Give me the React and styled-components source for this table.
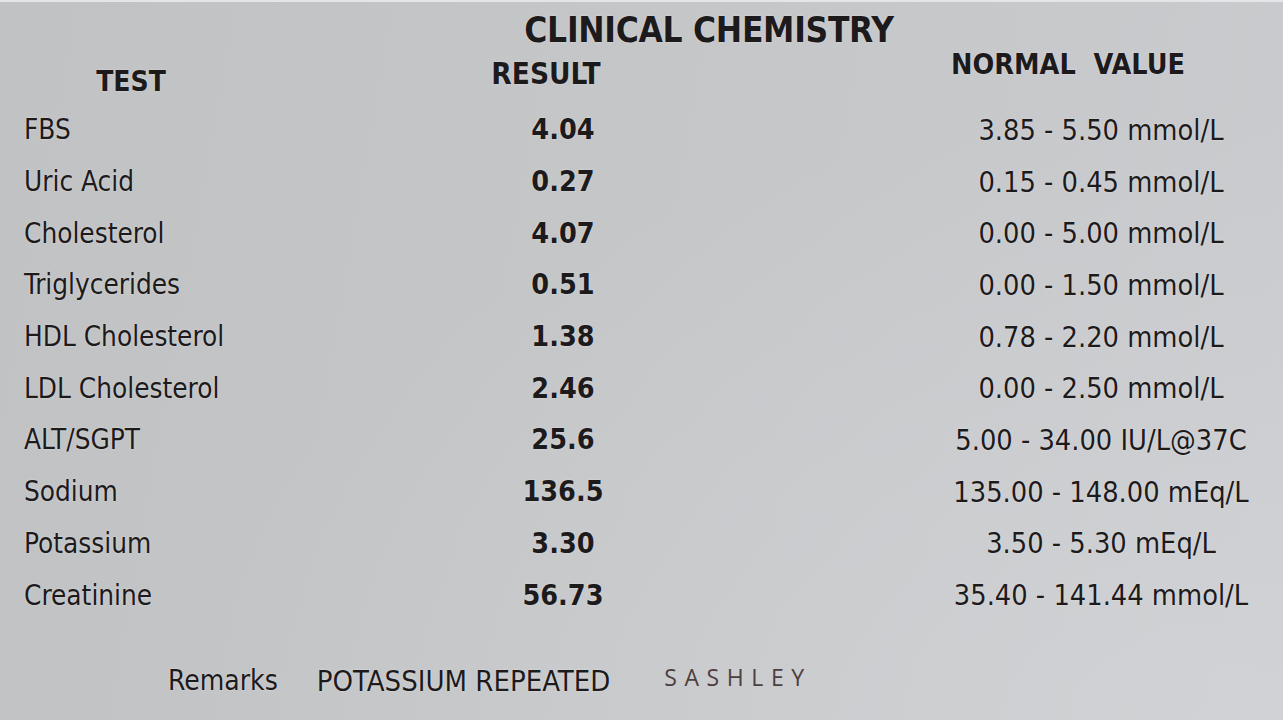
import React from 'react';
import styled, { createGlobalStyle } from 'styled-components';

const GlobalStyle = createGlobalStyle`
  html, body {
    margin: 0;
    padding: 0;
  }
  body {
    font-family: "DejaVu Sans Condensed", "DejaVu Sans", "Liberation Sans", sans-serif;
    font-stretch: condensed;
    color: #1d1a1c;
  }
`;

const Page = styled.div`
  width: 1283px;
  height: 720px;
  box-sizing: border-box;
  overflow: hidden;
  border-top: 2px solid #e4e5e7;
  background:
    radial-gradient(ellipse at 95% 100%, rgba(218, 219, 222, 0.45), rgba(218, 219, 222, 0) 60%),
    linear-gradient(100deg, #c1c2c4 0%, #c5c6c8 45%, #cacbce 100%);
  text-shadow: 0 0 2px rgba(235, 236, 238, 0.7);
`;

const Title = styled.h1`
  margin: 8px 0 0 0;
  padding-left: 135px;
  text-align: center;
  font-size: 35px;
  line-height: 40px;
  font-weight: bold;
  letter-spacing: -0.3px;
`;

const HeadRow = styled.div`
  display: grid;
  grid-template-columns: 262px 568px 1fr;
  height: 54px;
`;

const Head = styled.div`
  align-self: end;
  margin-bottom: ${p => p.lift}px;
  padding-left: ${p => p.shift || 0}px;
  text-align: center;
  font-size: ${p => p.size || 28}px;
  line-height: 30px;
  font-weight: bold;
  white-space: pre;
`;

const Table = styled.div`
  display: grid;
  grid-template-columns: 439px 200px 1fr;
  grid-auto-rows: 51.7px;
  padding-left: 24px;
`;

const Cell = styled.div`
  display: flex;
  align-items: center;
  white-space: nowrap;
`;

const TestName = styled(Cell)`
  justify-content: flex-start;
  font-size: 27.7px;
`;

const Result = styled(Cell)`
  justify-content: center;
  font-size: 28.5px;
  font-weight: bold;
`;

const Range = styled(Cell)`
  justify-content: center;
  padding-left: 256px;
  font-size: 28.7px;
`;

const Remarks = styled.div`
  display: flex;
  align-items: center;
  height: 44px;
  margin-top: 38px;
  padding-left: 168px;
  font-size: 28px;
`;

const RemarkLabel = styled.span`
  margin-right: ${p => p.gap}px;
  font-size: ${p => p.size || 28}px;
`;

const Signature = styled.span`
  font-family: "Open Sans", "Liberation Sans", sans-serif;
  font-stretch: normal;
  font-size: 23px;
  letter-spacing: 7.6px;
  color: #4e3e3d;
  margin-bottom: 8px;
  text-shadow: none;
`;

const rows = [
  ['FBS', '4.04', '3.85 - 5.50 mmol/L'],
  ['Uric Acid', '0.27', '0.15 - 0.45 mmol/L'],
  ['Cholesterol', '4.07', '0.00 - 5.00 mmol/L'],
  ['Triglycerides', '0.51', '0.00 - 1.50 mmol/L'],
  ['HDL Cholesterol', '1.38', '0.78 - 2.20 mmol/L'],
  ['LDL Cholesterol', '2.46', '0.00 - 2.50 mmol/L'],
  ['ALT/SGPT', '25.6', '5.00 - 34.00 IU/L@37C'],
  ['Sodium', '136.5', '135.00 - 148.00 mEq/L'],
  ['Potassium', '3.30', '3.50 - 5.30 mEq/L'],
  ['Creatinine', '56.73', '35.40 - 141.44 mmol/L'],
];

export default function App() {
  return (
    <Page>
      <GlobalStyle />
      <Title>CLINICAL CHEMISTRY</Title>
      <HeadRow>
        <Head lift={10}>TEST</Head>
        <Head lift={18} size={29.5}>RESULT</Head>
        <Head lift={27} shift={23} size={28.5}>NORMAL  VALUE</Head>
      </HeadRow>
      <Table>
        {rows.map(([name, value, range]) => (
          <React.Fragment key={name}>
            <TestName>{name}</TestName>
            <Result>{value}</Result>
            <Range>{range}</Range>
          </React.Fragment>
        ))}
      </Table>
      <Remarks>
        <RemarkLabel gap={39}>Remarks</RemarkLabel>
        <RemarkLabel gap={54} size={29}>POTASSIUM REPEATED</RemarkLabel>
        <Signature>SASHLEY</Signature>
      </Remarks>
    </Page>
  );
}
